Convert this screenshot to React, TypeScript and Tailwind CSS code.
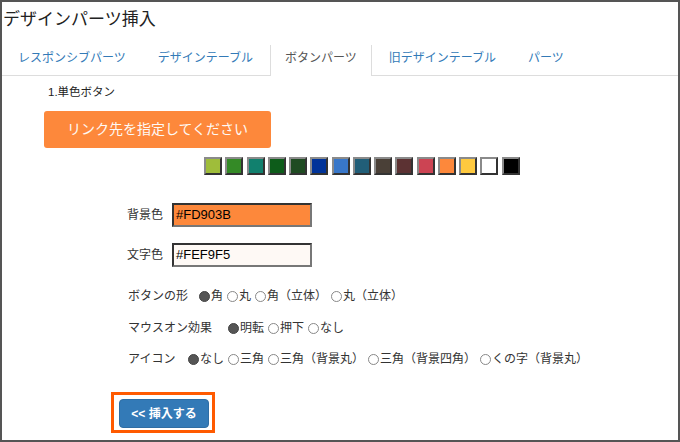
import React from "react";

const swatches = [
  "#9fbd3a",
  "#348a26",
  "#11806e",
  "#0d5c1a",
  "#1f4b22",
  "#003399",
  "#3877c9",
  "#215e78",
  "#4a4037",
  "#5c3233",
  "#cc4453",
  "#fd883b",
  "#fec93f",
  "#ffffff",
  "#000000",
];

function Radio({ checked, label }: { checked?: boolean; label: string }) {
  return (
    <span className="flex items-center">
      <span
        className={
          checked
            ? "w-[11px] h-[11px] rounded-full border border-[#444] bg-[#555] mr-[1px]"
            : "w-[11px] h-[11px] rounded-full border border-[#888] bg-white mr-[1px]"
        }
      />
      <span>{label}</span>
    </span>
  );
}

export default function App() {
  const tabs = [
    { label: "レスポンシブパーツ" },
    { label: "デザインテーブル" },
    { label: "ボタンパーツ", active: true },
    { label: "旧デザインテーブル" },
    { label: "パーツ" },
  ];
  return (
    <div
      className="w-[680px] h-[442px] border-2 border-[#555] bg-white text-[#333] overflow-hidden"
      style={{ fontFamily: '"Liberation Sans", "Noto Sans CJK JP", sans-serif' }}
    >
      <div className="pt-[6px] pl-[1px] text-[17px] leading-[24px] text-[#222]">
        デザインパーツ挿入
      </div>
      <div className="mt-[13px] flex border-b border-[#ddd] h-[31px] pl-[1px]">
        {tabs.map((t) =>
          t.active ? (
            <div
              key={t.label}
              className="mr-[2px] h-[31px] -mb-[1px] px-[14px] pt-[5px] leading-[16px] text-[12px] text-[#555] bg-white border-l border-r border-[#ddd]"
            >
              {t.label}
            </div>
          ) : (
            <div
              key={t.label}
              className="mr-[2px] h-[30px] px-[15px] pt-[5px] leading-[16px] text-[12px] text-[#337ab7]"
            >
              {t.label}
            </div>
          )
        )}
      </div>
      <div className="pl-[42px] flex flex-col items-start">
        <div className="mt-[8px] ml-[4px] text-[11.5px] leading-[16px] text-[#222]">1.単色ボタン</div>
        <div className="mt-[11px] w-[227px] h-[37px] rounded-[3px] bg-[#fd883b] text-[#fef9f5] text-[14px] flex items-center justify-center">
          リンク先を指定してください
        </div>
        <div className="mt-[9px] ml-[160px] flex gap-[3.25px]">
          {swatches.map((c) => (
            <div
              key={c}
              className="w-[18px] h-[18px] border-2 border-t-[#8a8a8a] border-l-[#8a8a8a] border-r-[#333] border-b-[#333]"
              style={{ backgroundColor: c }}
            />
          ))}
        </div>
        <div className="mt-[28px] ml-[83px] flex items-center text-[12px]">
          <span className="w-[45px]">背景色</span>
          <div className="w-[140px] h-[24px] border-2 border-t-[#333] border-l-[#333] border-r-[#777] border-b-[#777] bg-[#fd883b] text-black text-[13px] leading-[20px] pl-[2px]">
            #FD903B
          </div>
        </div>
        <div className="mt-[16px] ml-[83px] flex items-center text-[12px]">
          <span className="w-[45px]">文字色</span>
          <div className="w-[140px] h-[24px] border-2 border-t-[#333] border-l-[#333] border-r-[#777] border-b-[#777] bg-[#fef9f5] text-black text-[13px] leading-[20px] pl-[2px]">
            #FEF9F5
          </div>
        </div>
        <div className="mt-[21px] ml-[84px] flex items-center text-[12px] leading-[16px]">
          <span className="w-[71px]">ボタンの形</span>
          <div className="flex gap-[4px]">
            <Radio checked label="角" />
            <Radio label="丸" />
            <Radio label="角（立体）" />
            <Radio label="丸（立体）" />
          </div>
        </div>
        <div className="mt-[16px] ml-[84px] flex items-center text-[12px] leading-[16px]">
          <span className="w-[100px]">マウスオン効果</span>
          <div className="flex gap-[4px]">
            <Radio checked label="明転" />
            <Radio label="押下" />
            <Radio label="なし" />
          </div>
        </div>
        <div className="mt-[15px] ml-[84px] flex items-center text-[12px] leading-[16px]">
          <span className="w-[60px]">アイコン</span>
          <div className="flex gap-[4px]">
            <Radio checked label="なし" />
            <Radio label="三角" />
            <Radio label="三角（背景丸）" />
            <Radio label="三角（背景四角）" />
            <Radio label="くの字（背景丸）" />
          </div>
        </div>
        <div className="mt-[25px] ml-[67px] border-[3px] border-[#ff5a00] pl-[5px] pr-[3px] pt-[4px] pb-[2px]">
          <div className="w-[90px] h-[29px] rounded-[4px] bg-[#337ab7] border border-[#2e6da4] text-white text-[12px] font-bold flex items-center justify-center">
            &lt;&lt; 挿入する
          </div>
        </div>
      </div>
    </div>
  );
}
